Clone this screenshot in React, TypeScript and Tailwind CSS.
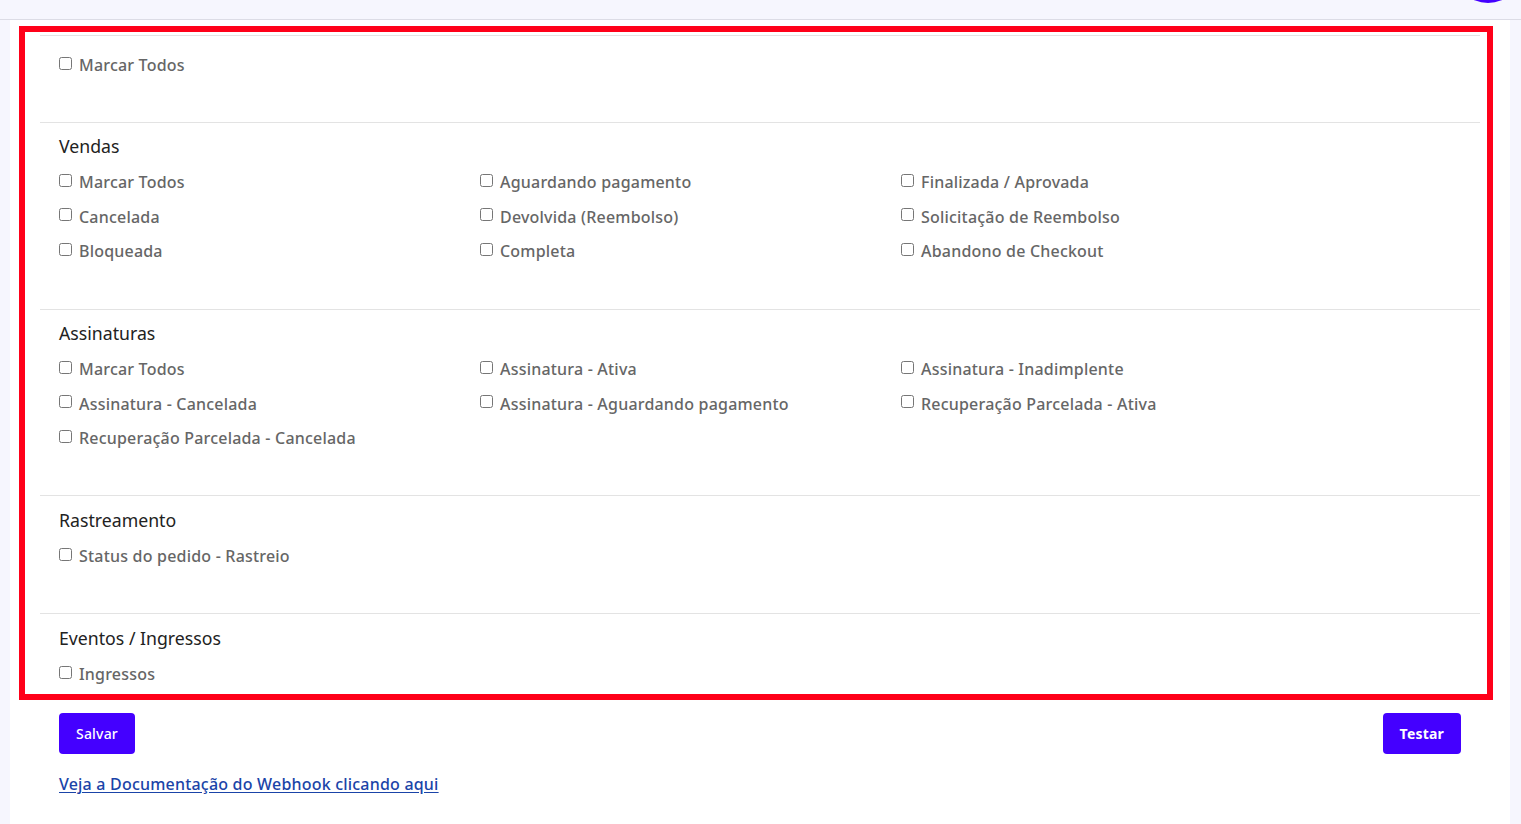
import React from "react";

type Section = {
  title?: string;
  items: string[];
  top: string;
  bottom: string;
};

const sections: Section[] = [
  { items: ["Marcar Todos"], top: "pt-[17px]", bottom: "pb-[45px]" },
  {
    title: "Vendas",
    items: [
      "Marcar Todos",
      "Aguardando pagamento",
      "Finalizada / Aprovada",
      "Cancelada",
      "Devolvida (Reembolso)",
      "Solicitação de Reembolso",
      "Bloqueada",
      "Completa",
      "Abandono de Checkout",
    ],
    top: "pt-[10px]",
    bottom: "pb-[46px]",
  },
  {
    title: "Assinaturas",
    items: [
      "Marcar Todos",
      "Assinatura - Ativa",
      "Assinatura - Inadimplente",
      "Assinatura - Cancelada",
      "Assinatura - Aguardando pagamento",
      "Recuperação Parcelada - Ativa",
      "Recuperação Parcelada - Cancelada",
    ],
    top: "pt-[10px]",
    bottom: "pb-[45px]",
  },
  {
    title: "Rastreamento",
    items: ["Status do pedido - Rastreio"],
    top: "pt-[11px]",
    bottom: "pb-[45px]",
  },
  {
    title: "Eventos / Ingressos",
    items: ["Ingressos"],
    top: "pt-[11px]",
    bottom: "pb-[8px]",
  },
];

function CheckItem({ label }: { label: string }) {
  return (
    <label className="flex h-[24px] items-center text-[16px] font-medium leading-[24px] tracking-[0.2px] text-[#666666]">
      <input
        type="checkbox"
        className="mr-[7px] h-[13px] w-[13px] -translate-y-[2px] accent-[#4400ff]"
      />
      <span>{label}</span>
    </label>
  );
}

function EventSection({ section }: { section: Section }) {
  return (
    <div className={`border-t border-[#e3e3e3] px-[19px] ${section.top} ${section.bottom}`}>
      {section.title && (
        <h3 className="mb-[10px] h-[27px] text-[17.7px] font-normal leading-[27px] text-[#222222]">
          {section.title}
        </h3>
      )}
      <div className="grid grid-cols-[421px_421px_421px] gap-y-[10.5px]">
        {section.items.map((item) => (
          <CheckItem key={item} label={item} />
        ))}
      </div>
    </div>
  );
}

export default function App() {
  return (
    <div
      className="min-h-screen bg-[#f6f6fe]"
      style={{ fontFamily: '"Noto Sans", "Open Sans", sans-serif' }}
    >
      <header className="relative h-[20px] overflow-hidden border-b border-[#dcdce6] bg-[#f6f6fe]">
        <div className="absolute left-[1453px] top-[-67px] h-[70px] w-[70px] rounded-full bg-[#4400ff]" />
      </header>

      <div className="pl-[10px] pr-[11px]">
        <main className="min-h-[804px] bg-white pt-[6px]">
          <div className="ml-[9px] w-[1474px] border-[6px] border-[#ff0019] pl-[15px] pr-[7px] pt-[3px]">
            {sections.map((s, i) => (
              <EventSection key={i} section={s} />
            ))}
          </div>

          <div className="mt-[13px] flex items-center justify-between px-[49px]">
            <button className="h-[41px] rounded-[4px] bg-[#4400ff] px-[17px] text-[14px] font-medium tracking-[0.2px] text-white">
              Salvar
            </button>
            <button className="h-[41px] rounded-[4px] bg-[#4400ff] px-[17px] text-[14px] font-bold tracking-[0.2px] text-white">
              Testar
            </button>
          </div>

          <div className="mt-[18px] px-[49px]">
            <a
              href="#"
              className="text-[16px] font-medium leading-[24px] tracking-[0.2px] text-[#1a44a8] underline underline-offset-2"
            >
              Veja a Documentação do Webhook clicando aqui
            </a>
          </div>
        </main>
      </div>
    </div>
  );
}
